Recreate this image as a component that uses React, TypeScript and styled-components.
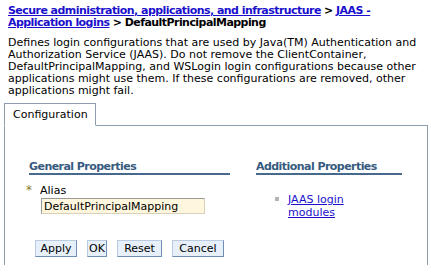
import styled, { createGlobalStyle } from 'styled-components'

const Global = createGlobalStyle`
  body {
    margin: 0;
    background: #fff;
    font-family: "DejaVu Sans", Verdana, sans-serif;
    font-size: 11px;
    color: #000;
  }
`

const Page = styled.div`
  width: 431px;
  height: 273px;
  overflow: hidden;
  padding-top: 5px;
  box-sizing: border-box;
`

const Breadcrumb = styled.div`
  padding: 0 8px;
  line-height: 12px;
  font-weight: bold;
  letter-spacing: -0.55px;
`

const CrumbLink = styled.a`
  color: #1a0fcc;
  text-decoration: underline;
`

const Description = styled.p`
  margin: 8px 0 0;
  padding: 0 8px;
  line-height: 12px;
`

const Tabs = styled.div`
  display: flex;
  margin: 6px 0 0 4px;
`

const Tab = styled.div`
  border: 1px solid #8d9caf;
  border-bottom: 1px solid #fff;
  padding: 5px 8px 4px 8px;
  width: 74px;
  height: 12px;
  line-height: 12px;
  background: #fff;
  margin-bottom: -1px;
  position: relative;
  z-index: 1;
`

const Panel = styled.div`
  margin-left: 4px;
  width: 424px;
  height: 140px;
  box-sizing: border-box;
  border: 1px solid #8d9caf;
  border-bottom: none;
  padding: 35px 0 0 24px;
`

const Columns = styled.div`
  display: grid;
  grid-template-columns: 201px 146px;
  column-gap: 26px;
`

const Heading = styled.div`
  color: #375a80;
  font-weight: bold;
  letter-spacing: -0.55px;
  line-height: 12px;
  border-bottom: 2px solid #48698e;
  height: 12px;
`

const Field = styled.div`
  margin-top: 9px;
  padding-left: 11px;
  line-height: 12px;
`

const Required = styled.span`
  color: #8c7a1e;
  display: inline-block;
  width: 14px;
  margin-left: -14px;
  font-size: 12px;
`

const TextInput = styled.input`
  display: block;
  margin: 1px 0 0 1px;
  width: 164px;
  height: 16px;
  box-sizing: border-box;
  border: 1px solid #9a9a9a;
  border-right-color: #d8d0b8;
  border-bottom-color: #d8d0b8;
  background: #fff6de;
  font-family: "DejaVu Sans", Verdana, sans-serif;
  font-size: 11px;
  padding: 0 2px;
  color: #000;
`

const Buttons = styled.div`
  display: flex;
  gap: 10px;
  margin: 26px 0 0 6px;
`

const Button = styled.button<{ $w: number }>`
  width: ${p => p.$w}px;
  height: 17px;
  padding: 0;
  box-sizing: border-box;
  border: 1px solid #6f8fb4;
  border-top-color: #b9cbe0;
  border-left-color: #b9cbe0;
  background: #e6effa;
  font-family: "DejaVu Sans", Verdana, sans-serif;
  font-size: 11px;
  color: #000;
  line-height: 12px;
`

const LinkList = styled.ul`
  list-style: none;
  margin: 18px 0 0;
  padding: 0 0 0 19px;
`

const LinkItem = styled.li`
  position: relative;
  width: 68px;
  padding-left: 13px;
  line-height: 13px;
  &::before {
    content: '';
    position: absolute;
    left: 0;
    top: 4px;
    width: 4px;
    height: 4px;
    background: #b4b4b4;
  }
`

const ItemLink = styled.a`
  color: #1a0fcc;
  text-decoration: underline;
`

export default function App() {
  return (
    <Page>
      <Global />
      <Breadcrumb>
        <CrumbLink>Secure administration, applications, and infrastructure</CrumbLink> &gt;{' '}
        <CrumbLink>JAAS - Application logins</CrumbLink> &gt; DefaultPrincipalMapping
      </Breadcrumb>
      <Description>
        Defines login configurations that are used by Java(TM) Authentication and Authorization
        Service (JAAS). Do not remove the ClientContainer, DefaultPrincipalMapping, and WSLogin
        login configurations because other applications might use them. If these configurations
        are removed, other applications might fail.
      </Description>
      <Tabs>
        <Tab>Configuration</Tab>
      </Tabs>
      <Panel>
        <Columns>
          <div>
            <Heading>General Properties</Heading>
            <Field>
              <Required>*</Required>Alias
              <TextInput defaultValue="DefaultPrincipalMapping" />
            </Field>
            <Buttons>
              <Button $w={42}>Apply</Button>
              <Button $w={20}>OK</Button>
              <Button $w={45}>Reset</Button>
              <Button $w={52}>Cancel</Button>
            </Buttons>
          </div>
          <div>
            <Heading>Additional Properties</Heading>
            <LinkList>
              <LinkItem>
                <ItemLink>JAAS login modules</ItemLink>
              </LinkItem>
            </LinkList>
          </div>
        </Columns>
      </Panel>
    </Page>
  )
}
